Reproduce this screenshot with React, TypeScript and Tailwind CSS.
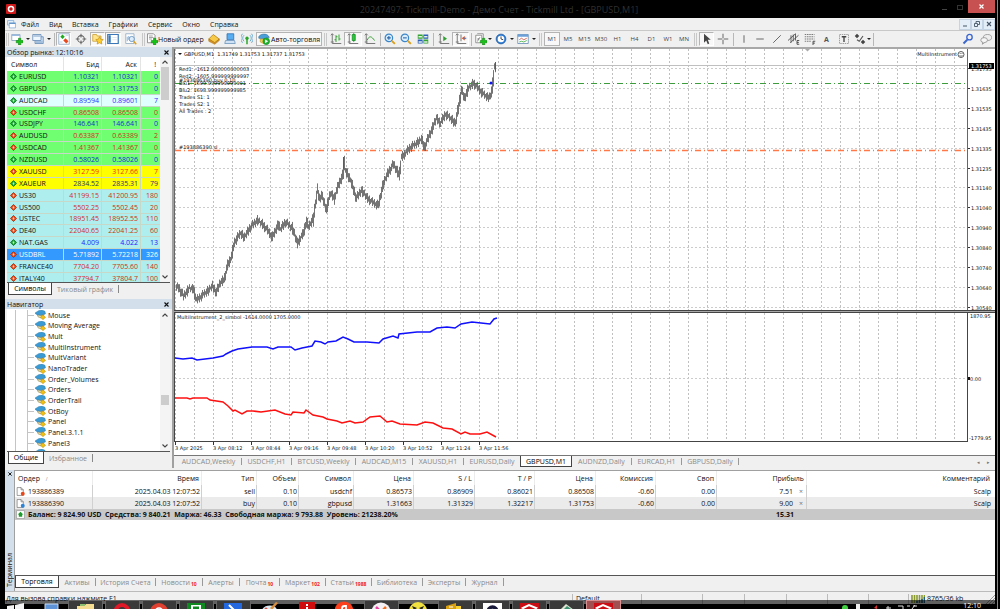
import type { ReactNode } from 'react'

// ── Data ────────────────────────────────────────────────────────
type Quote = { symbol: string; bid: string; ask: string; spread: string; up: boolean; row: string; text: string }

const GREEN = 'bg-[#70ff70]'
const AQUA = 'bg-[#afeeee]'
const BLUE_TEXT = 'text-[#1030d0]'
const RED_TEXT = 'text-[#d03020]'

const QUOTES: Quote[] = [
  { symbol: 'EURUSD',   bid: '1.10321',  ask: '1.10321',  spread: '0',   up: true,  row: GREEN, text: BLUE_TEXT },
  { symbol: 'GBPUSD',   bid: '1.31753',  ask: '1.31753',  spread: '0',   up: true,  row: GREEN, text: BLUE_TEXT },
  { symbol: 'AUDCAD',   bid: '0.89594',  ask: '0.89601',  spread: '7',   up: true,  row: 'bg-[#e0ffff]', text: 'text-[#3030ff]' },
  { symbol: 'USDCHF',   bid: '0.86508',  ask: '0.86508',  spread: '0',   up: false, row: GREEN, text: RED_TEXT },
  { symbol: 'USDJPY',   bid: '146.641',  ask: '146.641',  spread: '0',   up: true,  row: GREEN, text: BLUE_TEXT },
  { symbol: 'AUDUSD',   bid: '0.63387',  ask: '0.63389',  spread: '2',   up: false, row: GREEN, text: RED_TEXT },
  { symbol: 'USDCAD',   bid: '1.41367',  ask: '1.41367',  spread: '0',   up: false, row: GREEN, text: RED_TEXT },
  { symbol: 'NZDUSD',   bid: '0.58026',  ask: '0.58026',  spread: '0',   up: true,  row: GREEN, text: BLUE_TEXT },
  { symbol: 'XAUUSD',   bid: '3127.59',  ask: '3127.66',  spread: '7',   up: false, row: 'bg-[#ffff00]', text: 'text-[#f03000]' },
  { symbol: 'XAUEUR',   bid: '2834.52',  ask: '2835.31',  spread: '79',  up: true,  row: 'bg-[#ffff00]', text: 'text-[#303070]' },
  { symbol: 'US30',     bid: '41199.15', ask: '41200.95', spread: '180', up: false, row: AQUA, text: RED_TEXT },
  { symbol: 'US500',    bid: '5502.25',  ask: '5502.45',  spread: '20',  up: false, row: AQUA, text: RED_TEXT },
  { symbol: 'USTEC',    bid: '18951.45', ask: '18952.55', spread: '110', up: false, row: AQUA, text: RED_TEXT },
  { symbol: 'DE40',     bid: '22040.65', ask: '22041.25', spread: '60',  up: false, row: AQUA, text: RED_TEXT },
  { symbol: 'NAT.GAS',  bid: '4.009',    ask: '4.022',    spread: '13',  up: true,  row: AQUA, text: 'text-[#2020ff]' },
  { symbol: 'USDBRL',   bid: '5.71892',  ask: '5.72218',  spread: '326', up: false, row: 'bg-[#3399ff] text-white', text: 'text-white' },
  { symbol: 'FRANCE40', bid: '7704.20',  ask: '7705.60',  spread: '140', up: false, row: AQUA, text: RED_TEXT },
  { symbol: 'ITALY40',  bid: '37794.7',  ask: '37804.7',  spread: '100', up: false, row: AQUA, text: RED_TEXT },
]

const EXPERTS = [
  'Mouse', 'Moving Average', 'Mult', 'MultiInstrument', 'MultVariant', 'NanoTrader', 'Order_Volumes',
  'Orders', 'OrderTrail', 'OtBoy', 'Panel', 'Panel.3.1.1', 'Panel3', 'Parabolic',
]

const CHART_TABS = [
  { label: 'AUDCAD,Weekly', width: 'w-[66px]' },
  { label: 'USDCHF,H1',     width: 'w-[50px]' },
  { label: 'BTCUSD,Weekly', width: 'w-[64px]' },
  { label: 'AUDCAD,M15',    width: 'w-[57px]' },
  { label: 'XAUUSD,H1',     width: 'w-[51px]' },
  { label: 'EURUSD,Daily',  width: 'w-[56px]', last: true },
  { label: 'GBPUSD,M1',     width: 'w-[52px]', active: true },
  { label: 'AUDNZD,Daily',  width: 'w-[60px]' },
  { label: 'EURCAD,H1',     width: 'w-[50px]' },
  { label: 'GBPUSD,Daily',  width: 'w-[57px]' },
]

const TERMINAL_TABS = [
  { label: 'Активы',       width: 'w-[37px]' },
  { label: 'История Счета', width: 'w-[60px]' },
  { label: 'Новости',      width: 'w-[47px]', count: '10' },
  { label: 'Алерты',       width: 'w-[37px]' },
  { label: 'Почта',        width: 'w-[40px]', count: '10' },
  { label: 'Маркет',       width: 'w-[46px]', count: '102' },
  { label: 'Статьи',       width: 'w-[46px]', count: '1988' },
  { label: 'Библиотека',   width: 'w-[51px]' },
  { label: 'Эксперты',     width: 'w-[43px]' },
  { label: 'Журнал',       width: 'w-[38px]' },
]

const ORDER_COLUMNS = [
  { title: 'Время',       width: 'w-[109px]' },
  { title: 'Тип',         width: 'w-[55px]' },
  { title: 'Объем',       width: 'w-[42px]' },
  { title: 'Символ',      width: 'w-[55px]' },
  { title: 'Цена',        width: 'w-[60px]' },
  { title: 'S / L',       width: 'w-[61px]' },
  { title: 'T / P',       width: 'w-[60px]' },
  { title: 'Цена',        width: 'w-[61px]' },
  { title: 'Комиссия',    width: 'w-[60px]' },
  { title: 'Своп',        width: 'w-[61px]' },
]

const ORDERS = [
  { id: '193886389', sell: true,  profit: '7.51', cells: ['2025.04.03 12:07:52', 'sell', '0.10', 'usdchf', '0.86573', '0.86909', '0.86021', '0.86508', '-0.60', '0.00'] },
  { id: '193886390', sell: false, profit: '9.00', cells: ['2025.04.03 12:07:52', 'buy', '0.10', 'gbpusd', '1.31663', '1.31329', '1.32217', '1.31753', '-0.60', '0.00'] },
]

const PRICE_LEVELS = [
  { y: 20,  label: '1.31735' }, { y: 40,  label: '1.31635' }, { y: 60,  label: '1.31535' },
  { y: 80,  label: '1.31435' }, { y: 100, label: '1.31335' }, { y: 120, label: '1.31235' },
  { y: 139, label: '1.31140' }, { y: 159, label: '1.31040' }, { y: 179, label: '1.30940' },
  { y: 199, label: '1.30840' }, { y: 219, label: '1.30740' }, { y: 239, label: '1.30640' },
  { y: 259, label: '1.30540' },
]

const TIMES = ['2025', '08:12', '08:44', '09:16', '09:48', '10:20', '10:52', '11:24', '11:56']

const PRICE_PATH: [number, number][] = [
  [1, 238], [3, 238], [8, 247], [14, 239], [18, 240], [21, 251], [27, 246], [32, 242], [37, 237], [41, 243],
  [45, 233], [49, 230], [52, 216], [56, 208], [59, 193], [65, 184], [69, 188], [75, 178], [82, 171], [87, 175],
  [92, 181], [97, 188], [103, 175], [105, 180], [110, 173], [117, 179], [122, 194], [128, 184], [131, 172],
  [133, 178], [138, 169], [142, 141], [144, 149], [146, 146], [151, 160], [155, 144], [159, 149], [163, 136],
  [168, 124], [169, 114], [170, 121], [175, 131], [181, 149], [186, 141], [192, 149], [197, 153], [203, 156],
  [208, 134], [213, 123], [218, 115], [224, 126], [226, 108], [230, 104], [235, 98], [240, 95], [246, 90],
  [249, 98], [254, 86], [257, 79], [261, 69], [265, 74], [270, 65], [275, 69], [280, 74], [283, 58], [286, 41],
  [289, 49], [293, 39], [298, 34], [302, 38], [307, 44], [312, 48], [315, 47], [317, 38], [319, 18], [321, 18],
]

const BLUE_LINE = '0,45 8,46 17,45 22,47 38,45 48,43 51,41 57,38 63,36 70,35 77,34 92,34 98,36 103,34 116,34 120,37 127,35 132,34 137,33 140,28 146,29 150,31 153,29 161,28 168,24 173,26 179,29 192,29 204,30 208,26 218,23 223,25 224,21 242,19 255,19 262,15 272,14 280,15 286,11 297,9 306,10 315,11 319,6 322,5'
const RED_LINE = '0,85 12,85 15,86 18,85 32,85 35,87 48,89 53,93 58,98 60,97 67,101 72,98 78,98 86,99 100,97 110,101 116,102 118,99 129,100 131,97 138,102 148,104 152,106 162,108 167,110 175,108 180,110 188,109 195,104 205,103 212,109 217,108 225,111 242,112 250,109 258,110 268,115 277,116 286,121 290,119 295,121 305,121 312,119 321,124'

// Spread the outline over one thin bar per minute
function buildBars() {
  const bars: { x: number; y: number; h: number }[] = []
  for (let i = 1; i < PRICE_PATH.length; i++) {
    const [x0, y0] = PRICE_PATH[i - 1]
    const [x1, y1] = PRICE_PATH[i]
    for (let x = x0; x < x1; x++) {
      const y = y0 + ((y1 - y0) * (x - x0)) / (x1 - x0)
      const step = Math.abs((y1 - y0) / (x1 - x0))
      const up = 1 + ((x * 7) % 5) * 0.9 + step / 2
      const down = 1 + ((x * 11) % 7) * 0.7 + step / 2
      bars.push({ x, y: y - up, h: up + down })
    }
  }
  return bars
}
const BARS = buildBars()

// ── Icons ───────────────────────────────────────────────────────
function Svg({ children, className = 'w-[12px] h-[12px]' }: { children: ReactNode; className?: string }) {
  return <svg viewBox="0 0 16 16" fill="none" className={`block shrink-0 ${className}`}>{children}</svg>
}

const Plus = <path d="M8 11h3V8h3v3h3v3h-3v3h-3v-3H8z" transform="translate(-1 -1)" fill="#16c416" stroke="#087a08" strokeWidth=".7" />

const ICONS = {
  newChart: <><path d="M1 2h11v8H1z" fill="#fff" stroke="#7c9ab8" /><path d="M1 2h11v2H1z" fill="#9cbbe0" />{Plus}</>,
  profiles: <><path d="M4 5h11v9H4z" fill="#cfe2f5" stroke="#5b84b0" /><path d="M1 2h11v8H1z" fill="#eef6ff" stroke="#5b84b0" /><path d="M2 4h9M5 12h9" stroke="#5b84b0" /></>,
  market: <><path d="M1 1h14v14H1z" fill="#fff" stroke="#8aa4c0" /><path d="M3 5l3-3 3 3-3 3z" fill="#1dab1d" /><path d="M7 10l3-3 4 4-3 3z" fill="#e84a20" /><path d="M2 12h4M10 3h4" stroke="#a8c4e4" /></>,
  target: <><circle cx="8" cy="8" r="4.5" stroke="#666" strokeWidth="1.4" /><path d="M8 1v5M8 10v5M1 8h5M10 8h5" stroke="#666" strokeWidth="1.4" /></>,
  folder: <><path d="M1 2h5l1 2h5v7H1z" fill="#ffe48a" stroke="#c79a2a" /><path d="M10 5l1.5 3.3 3.5.4-2.6 2.4.7 3.6L10 13l-3.1 1.7.7-3.6L5 8.700l3.500-.4z" fill="#ffcf30" stroke="#b98510" strokeWidth=".8" /></>,
  navigator: <><path d="M1 2h14v12H1z" fill="#fff" stroke="#3b78b8" strokeWidth="1.6" /><path d="M2 3h3v10H2z" fill="#3b78b8" /><path d="M7 6h6M7 9h6" stroke="#d5e2ee" /></>,
  tester: <><path d="M1 1h11v13H1z" fill="#fff" stroke="#8aa4c0" /><path d="M3 11V5M5 9V4M7 10V6" stroke="#6c9ed0" /><circle cx="9" cy="8" r="3.5" fill="#dcecfb" stroke="#5585b5" /><path d="M11.500 11l3.500 4" stroke="#d8a020" strokeWidth="2" /></>,
  order: <><path d="M2 1h8l2 2v10H2z" fill="#fff" stroke="#777" /><path d="M4 4h5M4 6h6M4 8h4" stroke="#888" />{Plus}</>,
  book: <><path d="M1 8l6-6 8 6-6 5z" fill="#f7c948" stroke="#b07c10" /><path d="M1 8v3l8 4 6-5V8l-6 5z" fill="#d8942a" stroke="#a8700a" strokeWidth=".7" /></>,
  laptop: <><path d="M4 1h9v8H4z" fill="#58aef0" stroke="#2a6cb0" /><path d="M2 10h12l1 4H1z" fill="#cfe2f5" stroke="#6790b8" /></>,
  signal: <><circle cx="8" cy="7" r="2.200" fill="#2ba82b" /><path d="M4 11a5.500 5.500 0 010-8M12 3a5.500 5.500 0 010 8M2 13a9 9 0 010-12M14 1a9 9 0 010 12" stroke="#64a8d0" strokeWidth="1.300" /><path d="M8 8v7" stroke="#2ba82b" strokeWidth="2" /></>,
  auto: <><path d="M1 5c2-4 10-5 13-1l1 2-7 2-7-1z" fill="#4a9fd8" stroke="#2c6c9c" strokeWidth=".7" /><path d="M3 8h8v4l-4 2-4-2z" fill="#f2cd4c" stroke="#b08a20" strokeWidth=".7" /><circle cx="11" cy="11" r="4.500" fill="#20b030" stroke="#0c7a18" strokeWidth=".6" /><path d="M9.500 8.500l4 2.500-4 2.500z" fill="#fff" /></>,
  bars: <><path d="M3 1v13h12M1 12h4M1 3l2-2 2 2" stroke="#777" strokeWidth="1.300" /><path d="M8 3v9M6 9h2M8 5h2M12 2v8M12 8h2" stroke="#33a033" strokeWidth="1.300" /></>,
  candles: <><path d="M3 1v13h12M1 12h4M1 3l2-2 2 2" stroke="#777" strokeWidth="1.300" /><path d="M9 0v12" stroke="#108a20" /><path d="M7 2h4v8H7z" fill="#28c838" stroke="#108a20" /></>,
  line: <><path d="M3 1v13h12M1 12h4M1 3l2-2 2 2" stroke="#777" strokeWidth="1.300" /><path d="M4 10c3-7 6-6 10 0" stroke="#33a033" strokeWidth="1.300" /></>,
  zoomIn: <><circle cx="6.500" cy="6.500" r="5" fill="#d9edfc" stroke="#3c86c8" strokeWidth="1.600" /><path d="M4 6.500h5M6.500 4v5" stroke="#2463a8" strokeWidth="1.400" /><path d="M10.500 10.500l4 4" stroke="#d8a020" strokeWidth="2.600" /></>,
  zoomOut: <><circle cx="6.500" cy="6.500" r="5" fill="#d9edfc" stroke="#3c86c8" strokeWidth="1.600" /><path d="M4 6.500h5" stroke="#2463a8" strokeWidth="1.400" /><path d="M10.500 10.500l4 4" stroke="#d8a020" strokeWidth="2.600" /></>,
  tile: <><path d="M1 2h6.500v5.500H1zM8.500 8.500H15V14H8.500z" fill="#31a331" /><path d="M8.500 2H15v5.500H8.500zM1 8.500h6.500V14H1z" fill="#2a60b8" /><path d="M2 4h4.500v2H2zM9.500 4H14v2H9.500zM2 11h4.500v2H2zM9.500 11H14v2H9.500z" fill="#e6f2e6" /></>,
  scroll: <><path d="M3 1v13h12M1 12h4M1 3l2-2 2 2" stroke="#777" strokeWidth="1.300" /><path d="M7 4l5 3.500L7 11z" fill="#33a033" /></>,
  shift: <><path d="M3 1v13h12M1 12h4M1 3l2-2 2 2M8 2v9" stroke="#777" strokeWidth="1.300" /><path d="M9 7l4-3v6z" fill="#e05020" /><path d="M12 7h3" stroke="#3c76c0" strokeWidth="1.500" /></>,
  indicator: <><path d="M1 3h8v10H1zM3 1h8v10" fill="#fff" stroke="#777" /><path d="M3 11c2 0 1-5 4-5M3 8h3" stroke="#666" />{Plus}</>,
  clock: <><circle cx="8" cy="8" r="6.500" fill="#2f7ed8" stroke="#1b559c" /><circle cx="8" cy="8" r="4.400" fill="#fff" /><path d="M8 4.500V8l3 1" stroke="#333" strokeWidth="1.200" /></>,
  template: <><path d="M1 2h14v12H1z" fill="#fff" stroke="#5b84b0" /><path d="M1 2h14v3H1z" fill="#6ba0d8" /><path d="M3 9l3-2 3 2 4-2" stroke="#c04030" /><path d="M3 12l3-1 3 1 4-2" stroke="#2b9c2b" /></>,
  cursor: <path d="M4 1v12l3-3 2 5 2-1-2-5h4z" fill="#444" />,
  cross: <path d="M8 1v6M8 9v6M1 8h6M9 8h6" stroke="#666" strokeWidth="1.300" />,
  vline: <path d="M8 3v10" stroke="#666" strokeWidth="1.300" />,
  hline: <path d="M3 8h10" stroke="#666" strokeWidth="1.300" />,
  tline: <path d="M3 13L13 3" stroke="#666" strokeWidth="1.300" />,
  channel: <><path d="M0 10l10-9M3 13l11-10M4 3v10M7 2v9M10 1v9" stroke="#555" strokeWidth="1.200" /><path d="M15 10h-3v5h3M12 12.500h2.500" stroke="#444" strokeWidth="1.200" /></>,
  fibo: <><path d="M1 2h13M1 5h13M1 8h13M1 11h8" stroke="#777" strokeWidth="1.300" strokeDasharray="2 1" /><path d="M12 16v-5h3M12 13.500h2.500" stroke="#444" strokeWidth="1.200" /></>,
  label: <><path d="M2 2h12v12H2z" stroke="#888" strokeDasharray="2 1" /><path d="M5 5h6M8 5v7" stroke="#444" strokeWidth="1.800" /></>,
  arrows: <><path d="M1 4l3-3 3 3-3 3zM9 12l3-3 3 3-3 3z" fill="#444" /><path d="M4 9l3 2 5-7" stroke="#555" strokeWidth="1.500" /></>,
  search: <><circle cx="10" cy="5.500" r="3.600" stroke="#3a66d0" strokeWidth="1.800" /><path d="M7 9l-5 5" stroke="#3a66d0" strokeWidth="2.600" /></>,
  chat: <><ellipse cx="10" cy="6" rx="5.500" ry="4" fill="#eee" stroke="#888" /><ellipse cx="5.500" cy="9.500" rx="4.500" ry="3.300" fill="#f6f6f6" stroke="#888" /><path d="M4 12l-1 3 3-2" fill="#f6f6f6" stroke="#888" /></>,
}
type IconName = keyof typeof ICONS

function Expert() {
  return (
    <Svg className="w-[11px] h-[10px]">
      <path d="M-1 5l6-4 5-1 5 2 1 4-6 3-7-1z" fill="#3a9ad4" stroke="#2a7aa8" strokeWidth=".8" />
      <path d="M3 8l6 1 4-2v3l-4 3-5-2z" fill="#e0d8a8" stroke="#7d7a50" strokeWidth=".7" />
      <path d="M12 8l4 3.500-4 4-4-4z" fill="#f2c010" stroke="#a88208" strokeWidth=".8" />
    </Svg>
  )
}

function QuoteArrow({ up }: { up: boolean }) {
  return (
    <Svg className="w-[7px] h-[7px]">
      <path d="M8 1l7 7-7 7-7-7z" fill={up ? '#20a838' : '#e8481c'} stroke={up ? '#0d7a22' : '#b03008'} strokeWidth="2" />
      <path d={up ? 'M8 5l3 3H9v3H7V8H5z' : 'M8 11l3-3H9V5H7v3H5z'} fill={up ? '#c8f4d0' : '#fcd8c8'} />
    </Svg>
  )
}

// ── Small parts ─────────────────────────────────────────────────
function Tool({ icon, label, width, pressed }: { icon: IconName; label: string; width: string; pressed?: boolean }) {
  return (
    <button
      aria-label={label}
      className={`flex h-[14px] shrink-0 items-center justify-center ${width} ${pressed ? 'border border-[#b4b4b4] border-r-white border-b-white bg-[#f8f8f8]' : ''}`}
    >
      <Svg>{ICONS[icon]}</Svg>
    </button>
  )
}

function Caret({ width }: { width: string }) {
  return (
    <button aria-label="Список" className={`flex h-[14px] shrink-0 items-center justify-center ${width}`}>
      <svg viewBox="0 0 4 2" className="h-[2px] w-[4px]"><path d="M0 0h4L2 2z" fill="#222" /></svg>
    </button>
  )
}

function Sep({ width }: { width: string }) {
  return <span className={`flex h-[13px] shrink-0 justify-center ${width}`}><span className="w-px bg-[#b8b8b8]" /></span>
}

function Grip({ width }: { width: string }) {
  return <span className={`flex h-[13px] shrink-0 justify-center ${width}`}><span className="w-[3px] border-x border-[#c8c8c8]" /></span>
}

function Chevron({ up }: { up?: boolean }) {
  return (
    <svg viewBox="0 0 6 4" fill="none" className="h-[4px] w-[6px]">
      <path d={up ? 'M.5 3.500L3 1l2.500 2.500' : 'M.5.5L3 3 5.500.5'} stroke="#444" strokeWidth="1.100" />
    </svg>
  )
}

function PanelTitle({ children }: { children: ReactNode }) {
  return (
    <div className="flex h-[10px] shrink-0 items-center justify-between bg-[#d3dfea] pl-[2px] pr-[3px]">
      <h2 className="whitespace-nowrap">{children}</h2>
      <button aria-label="Закрыть" className="h-[6px] w-[5px]">
        <svg viewBox="0 0 5 5" className="h-[5px] w-[5px]"><path d="M.5.5l4 4M4.500.5l-4 4" stroke="#111" strokeWidth="1.100" /></svg>
      </button>
    </div>
  )
}

// ── Market watch ────────────────────────────────────────────────
function MarketWatch() {
  const cell = 'border-b border-l border-[#c8d8c8] p-0 pr-[2px] text-right'
  return (
    <section>
      <PanelTitle>Обзор рынка: 12:10:16</PanelTitle>
      <div className="ml-[2px] mr-[2px] flex h-[226px] overflow-hidden border-b border-[#555] bg-white">
        <table className="h-[228px] flex-1 table-fixed border-separate border-spacing-0">
          <thead>
            <tr className="h-[14px]">
              <th className="w-[56px] p-0 pl-[4px] text-left font-normal">Символ</th>
              <th className="w-[38px] border-l border-[#e4e4e4] p-0 pr-[2px] text-right font-normal">Бид</th>
              <th className="w-[39px] border-l border-[#e4e4e4] p-0 pr-[3px] text-right font-normal">Аск</th>
              <th className="w-[20px] border-l border-[#e4e4e4] p-0 pr-[4px] text-right font-normal">!</th>
            </tr>
          </thead>
          <tbody>
            {QUOTES.map(q => (
              <tr key={q.symbol} className={q.row}>
                <td className="border-b border-[#c8d8c8] p-0 pl-[3px]">
                  <span className="flex items-center gap-[2px]"><QuoteArrow up={q.up} />{q.symbol}</span>
                </td>
                <td className={`${cell} ${q.text}`}>{q.bid}</td>
                <td className={`${cell} ${q.text}`}>{q.ask}</td>
                <td className={`${cell} ${q.text}`}>{q.spread}</td>
              </tr>
            ))}
          </tbody>
        </table>
        <div className="flex w-[10px] flex-col items-center bg-[#f4f4f4] py-[3px]">
          <Chevron up />
          <span className="mt-[3px] h-[33px] w-[8px] bg-[#cdcdcd]" />
          <span className="mt-auto"><Chevron /></span>
        </div>
      </div>
      <div className="flex h-[16px] items-start pl-[3px] text-[#8a8a8a]">
        <button className="h-[12px] w-[44px] border border-t-0 border-[#444] bg-white text-black">Символы</button>
        <button className="h-[12px] pl-[5px]">Тиковый график</button>
        <span className="mt-[2px] ml-[5px] h-[8px] w-px bg-[#888]" />
      </div>
    </section>
  )
}

// ── Navigator ───────────────────────────────────────────────────
function Navigator() {
  return (
    <section>
      <PanelTitle>Навигатор</PanelTitle>
      <div className="ml-[2px] mr-[2px] flex h-[143px] overflow-hidden border-b border-[#555] bg-white pt-px">
        <ul className="ml-[8px] flex h-[149px] flex-1 flex-col border-l border-[#c4c4c4] pl-[11px]">
          {EXPERTS.map(name => (
            <li key={name} className="flex min-h-0 flex-1 items-center border-l border-[#c4c4c4]">
              <span className="mr-px h-px w-[6px] bg-[#c4c4c4]" />
              <Expert />
              <span className="pl-[2px]">{name}</span>
            </li>
          ))}
        </ul>
        <div className="flex w-[10px] flex-col items-center bg-[#f4f4f4] py-[3px]">
          <Chevron up />
          <span className="mt-[78px] h-[10px] w-[8px] bg-[#cdcdcd]" />
          <span className="mt-auto"><Chevron /></span>
        </div>
      </div>
      <div className="flex h-[16px] items-start pl-[3px] text-[#8a8a8a]">
        <button className="h-[12px] w-[36px] border border-t-0 border-[#444] bg-white text-black">Общие</button>
        <button className="h-[12px] pl-[5px]">Избранное</button>
        <span className="mt-[2px] ml-[5px] h-[8px] w-px bg-[#888]" />
      </div>
    </section>
  )
}

// ── Chart ───────────────────────────────────────────────────────
function VerticalGrid({ id }: { id: string }) {
  return (
    <>
      <pattern id={id} x="19" width="19" height="4" patternUnits="userSpaceOnUse">
        <path d="M.5 0v2" stroke="#c0c0c0" />
      </pattern>
      <rect width="100%" height="100%" fill={`url(#${id})`} />
    </>
  )
}

function Chart() {
  const small = "[font-family:'DejaVu_Sans',sans-serif] text-[5px] fill-[#111]"
  return (
    <section className="flex min-w-0 flex-1 flex-col border-l-2 border-[#a0a0a0] bg-white">
      <div className="flex border-t-2 border-[#a8a8a8]">
        <svg className={`h-[261px] min-w-0 flex-1 border-l border-r border-[#666] ${small}`}>
          <VerticalGrid id="grid-price" />
          {PRICE_LEVELS.map(p => <line key={p.y} x1="0" x2="100%" y1={p.y - 0.5} y2={p.y - 0.5} stroke="#cccccc" strokeDasharray="2 2" />)}
          <line x1="0" x2="100%" y1="16.5" y2="16.5" stroke="#c0c0c0" />
          <line x1="0" x2="100%" y1="34.5" y2="34.5" stroke="#3c9c3c" strokeDasharray="6 3 1 3" />
          <line x1="0" x2="100%" y1="101.500" y2="101.500" stroke="#ff7848" strokeWidth="1.300" strokeDasharray="6 3 1 3" />
          <g fill="#5c5c5c">
            {BARS.map(b => <rect key={b.x} x={b.x} y={b.y} width=".85" height={b.h} />)}
            <rect x="168" y="108" width="1" height="12" />
            <rect x="320" y="13" width="1" height="9" />
          </g>
          <circle cx="316" cy="34" r="1.500" fill="#1010ff" />
          <path d="M3 4h4L5 6z" />
          <text x="9" y="7">GBPUSD,M1&#160; 1.31749 1.31753 1.31737 1.31753</text>
          <text x="4" y="22">Red1: -1612.000000000003</text>
          <text x="4" y="29">Red2: -1605.999999999997</text>
          <text x="4" y="33">#193886390 buy 0.10</text>
          <text x="4" y="36">Blu1: 1699.999999999991</text>
          <text x="4" y="43">Blu2: 1698.999999999985</text>
          <text x="4" y="50">Trades S1: 1</text>
          <text x="4" y="57">Trades S2: 1</text>
          <text x="4" y="64">All Trades : 2</text>
          <text x="4" y="100">#193886390 sl</text>
          <svg x="100%" overflow="visible">
            <text x="-10" y="7" textAnchor="end">MultiInstrument</text>
            <circle cx="-6" cy="5.500" r="3" fill="none" stroke="#333" strokeWidth=".8" />
            <path d="M-7.500 6.500q1.500 1.500 3 0M-7.300 4.500h1M-5.500 4.500h1" stroke="#333" strokeWidth=".7" fill="none" />
            <path d="M-162 0h5l-2.500 2.500z" fill="#aaa" />
          </svg>
        </svg>
        <svg className={`h-[261px] w-[27px] ${small}`}>
          {PRICE_LEVELS.map(p => (
            <g key={p.y}>
              <path d={`M0 ${p.y - 0.5}h2`} stroke="#333" />
              <text x="3" y={p.y + 2}>{p.label}</text>
            </g>
          ))}
          <rect x="1" y="14" width="25" height="6" fill="#000" />
          <text x="3" y="19" className="fill-white">1.31753</text>
        </svg>
      </div>
      <div className="h-[3px] border-y border-[#444] bg-[#a8a8a8]" />
      <div className="flex">
        <svg className={`h-[129px] min-w-0 flex-1 border-l border-r border-b border-[#444] ${small}`}>
          <VerticalGrid id="grid-indicator" />
          <line x1="0" x2="100%" y1="65.500" y2="65.500" stroke="#cccccc" strokeDasharray="2 2" />
          <polyline points={BLUE_LINE} fill="none" stroke="#1010ff" strokeWidth="1.500" />
          <polyline points={RED_LINE} fill="none" stroke="#ff1010" strokeWidth="1.500" />
          <text x="2" y="6">MultiInstrument_2_simbol -1614.0000 1705.0000</text>
        </svg>
        <svg className={`h-[129px] w-[27px] ${small}`}>
          <text x="2" y="5">1870.95</text>
          <rect x="0" y="64" width="2" height="3" />
          <text x="2" y="68">0.00</text>
          <text x="1" y="127">-1779.95</text>
        </svg>
      </div>
      <svg className={`h-[13px] w-full ${small}`}>
        {TIMES.map((t, i) => (
          <g key={t}>
            <path d={`M${i * 38 + 1.5} 0v3`} stroke="#333" />
            <text x={i * 38 + 1} y="8">3 Apr {t}</text>
          </g>
        ))}
      </svg>
      <nav className="flex h-[13px] border-t border-[#777] bg-[#f0f0f0] pl-[2px] text-[#8a8a8a]">
        {CHART_TABS.map(t => (
          <button
            key={t.label}
            className={t.active
              ? `h-[11px] whitespace-nowrap border border-t-0 border-[#444] bg-white text-black ${t.width}`
              : `flex h-[11px] items-center justify-center whitespace-nowrap ${t.width}`}
          >
            {t.active ? t.label : <span className={`flex h-[7px] w-full items-center justify-center ${t.last ? '' : 'border-r border-[#999]'}`}>{t.label}</span>}
          </button>
        ))}
        <span className="ml-auto flex items-center gap-[7px] pr-[5px] text-[5px] text-[#777]">
          <button aria-label="Влево">◂</button><button aria-label="Вправо">▸</button>
        </span>
      </nav>
    </section>
  )
}

// ── Terminal ────────────────────────────────────────────────────
function OrderIcon({ sell }: { sell: boolean }) {
  return (
    <Svg className="w-[9px] h-[9px]">
      <path d="M2 1h7l4 4v10H2z" fill="#fff" stroke="#555" /><path d="M9 1v4h4" stroke="#555" />
      <circle cx="12" cy="12" r="3.500" fill={sell ? '#e84818' : '#2c84d8'} />
    </Svg>
  )
}

function Terminal() {
  const cell = 'border-r border-[#d0d0d0] p-0 pr-px text-right'
  return (
    <section className="mt-[2px] flex min-h-[80px] flex-1">
      <div className="flex w-[9px] shrink-0 flex-col items-center justify-between bg-[#d3dfea] pt-[2px] pb-[4px]">
        <button aria-label="Закрыть"><svg viewBox="0 0 5 5" className="h-[4px] w-[4px]"><path d="M.5.5l4 4M4.500.5l-4 4" stroke="#111" strokeWidth="1.200" /></svg></button>
        <h2 className="rotate-180 [writing-mode:vertical-rl]">Терминал</h2>
      </div>
      <div className="flex min-w-0 flex-1 flex-col border-t border-l border-[#a0a0a0] bg-white">
        <table className="w-full table-fixed border-separate border-spacing-0 whitespace-nowrap">
          <thead>
            <tr className="h-[14px]">
              <th className="w-[78px] border-r border-[#ececec] p-0 pl-[3px] text-left font-normal">Ордер <span className="pl-[4px] text-[5px] text-[#888]">/</span></th>
              {ORDER_COLUMNS.map((c, i) => (
                <th key={i} className={`border-r border-[#ececec] p-0 pr-[2px] text-right font-normal ${c.width}`}>{c.title}</th>
              ))}
              <th className="w-[90px] border-r border-[#ececec] p-0 pr-[2px] text-right font-normal">Прибыль</th>
              <th className="p-0 pr-[5px] text-right font-normal">Комментарий</th>
            </tr>
          </thead>
          <tbody>
            {ORDERS.map(o => (
              <tr key={o.id} className={`h-[12px] ${o.sell ? 'bg-white' : 'bg-[#ebebeb]'}`}>
                <td className="border-r border-[#d0d0d0] p-0 pl-px"><span className="flex items-center gap-[3px]"><OrderIcon sell={o.sell} />{o.id}</span></td>
                {o.cells.map((c, i) => <td key={i} className={cell}>{c}</td>)}
                <td className={cell}>
                  <span className="flex items-center justify-end gap-[6px]">{o.profit}<button aria-label="Закрыть ордер" className="pr-[2px] text-[#777]">×</button></span>
                </td>
                <td className="p-0 pr-[4px] text-right">Scalp</td>
              </tr>
            ))}
            <tr className="h-[11px] bg-[#c8c8c8] font-bold">
              <td colSpan={11} className="p-0 pl-px">
                <span className="flex items-center gap-[3px]">
                  <Svg className="w-[9px] h-[9px]"><path d="M1 1h14v14H1z" fill="#fff" stroke="#888" /><path d="M8 3l5 5h-2v4H5V8H3z" fill="#1c9c2c" /></Svg>
                  <span className="whitespace-pre">{'Баланс: 9 824.90 USD  Средства: 9 840.21  Маржа: 46.33  Свободная маржа: 9 793.88  Уровень: 21238.20%'}</span>
                </span>
              </td>
              <td className="p-0 pr-[13px] text-right">15.31</td>
              <td className="p-0" />
            </tr>
          </tbody>
        </table>
        <nav className="mt-auto flex h-[16px] items-start border-t border-[#555] bg-[#f0f0f0] text-[#8a8a8a]">
          <button className="h-[12px] w-[44px] border border-t-0 border-[#444] bg-white text-black">Торговля</button>
          {TERMINAL_TABS.map(t => (
            <button key={t.label} className={`flex h-[12px] items-center justify-center whitespace-nowrap ${t.width}`}>
              <span className="flex h-[8px] w-full items-center justify-center border-r border-[#999]">
                {t.label}{t.count && <span className="mt-[4px] pl-px text-[5px] font-bold text-[#f02020]">{t.count}</span>}
              </span>
            </button>
          ))}
        </nav>
      </div>
    </section>
  )
}

function StatusBar() {
  const cell = 'h-[10px] border-l border-[#bbb]'
  return (
    <footer className="flex h-[13px] shrink-0 items-end border-t border-[#bbb] bg-[#f0f0f0] leading-[10px]">
      <span className="flex-1 whitespace-nowrap pl-px">Для вызова справки нажмите F1</span>
      <span className={`w-[69px] pl-[3px] ${cell}`}>Default</span>
      <span className={`w-[61px] ${cell}`} />
      <span className={`w-[42px] ${cell}`} />
      <span className={`w-[42px] ${cell}`} />
      <span className={`w-[41px] ${cell}`} />
      <span className={`w-[41px] ${cell}`} />
      <span className={`w-[40px] ${cell}`} />
      <span className={`flex w-[77px] items-center gap-[2px] pl-[2px] ${cell}`}>
        <svg viewBox="0 0 14 8" className="h-[8px] w-[14px]">
          <path d="M1 0v8M3.500 0v8M6 0v8M8.500 0v8M11 0v8M13.500 0v8" stroke="#8a9a30" strokeWidth="1.600" />
          <path d="M6 6v2M8.500 5v3M11 4v4M13.500 2v6" stroke="#1f5c86" strokeWidth="1.600" />
        </svg>
        8765/36 kb
      </span>
      <svg viewBox="0 0 10 10" className="h-[10px] w-[10px]"><path d="M1 10l9-9M4 10l6-6M7 10l3-3" stroke="#999" /></svg>
    </footer>
  )
}

// ── Taskbar ─────────────────────────────────────────────────────
const TASKS: { name: string; open?: boolean; active?: boolean; icon: ReactNode }[] = [
  { name: 'Проводник', open: true, icon: <><path d="M1 4h7l2-2h8v14H1z" fill="#f4dc90" /><path d="M4 2h5v2H4z" fill="#8cc070" /></> },
  { name: 'Opera', open: true, icon: <ellipse cx="9" cy="10" rx="6.500" ry="7" fill="none" stroke="#e01828" strokeWidth="4" /> },
  { name: 'Chrome', open: true, icon: <><circle cx="9" cy="10" r="9" fill="#e04030" /><path d="M9 10l9 0a9 9 0 01-9 9z" fill="#f8c820" /><circle cx="9" cy="10" r="4" fill="#3c80e8" stroke="#fff" strokeWidth="1.500" /></> },
  { name: 'Таблицы', open: true, icon: <><path d="M0 1h18v17H0z" fill="#108a20" /><path d="M4 3h10v6H4z" fill="#fff" /><path d="M6 4.500h6v4H6z" fill="#108a20" /></> },
  { name: 'PowerShell', open: true, icon: <><path d="M0 1h18v17H0z" fill="#2468e0" /><path d="M5 3l5 5-5 5" fill="none" stroke="#fff" strokeWidth="2" /></> },
  { name: 'Paint', icon: <><path d="M1 9c2-6 14-6 15 0s-5 7-8 7-8-2-7-7z" fill="#d8e8f4" /><path d="M9 7l6-6 2 1-6 7z" fill="#d89040" /><circle cx="5" cy="8" r="1.500" fill="#e05040" /></> },
  { name: 'Инфо', icon: <><path d="M1 1h16v16H1z" fill="#d00c0c" /><path d="M8 3h2v2H8zM8 6h2v6H8z" fill="#fff" /></> },
  { name: 'Яндекс', icon: <><circle cx="9" cy="10" r="9.500" fill="#fc3f1d" /><path d="M11 16V5H9.500a2.500 2.500 0 000 5H11" fill="none" stroke="#fff" strokeWidth="1.800" /></> },
  { name: 'Диск', open: true, icon: <><circle cx="9" cy="10" r="9.500" fill="#f4f0f4" /><path d="M4 5l5 5" stroke="#e840a0" strokeWidth="2.500" /><path d="M14 5l-5 5" stroke="#f07020" strokeWidth="2.500" /></> },
  { name: 'Смайлик', icon: <><circle cx="9" cy="10" r="9" fill="#f0e040" /><path d="M3 5l5 2-3 2zM15 5l-5 2 3 2z" fill="#222" /></> },
  { name: 'Почта', open: true, icon: <><path d="M0 4l10-3v17H0z" fill="#d8a010" /><path d="M10 4h5v10h-5z" fill="#f8d030" /><path d="M3 5h4M3 8h3" stroke="#fff" /></> },
  { name: 'Обсидиан', open: true, icon: <><path d="M0 1h19v17H0z" fill="#fff" /><path d="M5 10a4.500 5 0 019 0" fill="none" stroke="#181838" strokeWidth="3.500" /></> },
  { name: 'Терминал 1', open: true, icon: <><path d="M0 1h19v17H0z" fill="#cc0c14" /><path d="M3 6l6-3 7 3-6 4z" fill="none" stroke="#fff" strokeWidth="2" /></> },
  { name: 'Фото', open: true, icon: <><path d="M2 9l7-7 8 6-6 8z" fill="#dce4d0" /><path d="M6 8l4-4 4 3-3 4z" fill="#3a9070" /></> },
  { name: 'Терминал 2', open: true, active: true, icon: <><path d="M0 1h19v17H0z" fill="#cc0c14" /><path d="M3 6l6-3 7 3-6 4z" fill="none" stroke="#fff" strokeWidth="2" /></> },
]

function Taskbar() {
  return (
    <nav aria-label="Панель задач" className="relative -mt-[4px] flex h-[9px] shrink-0 items-start overflow-hidden bg-black/60">
      <button aria-label="Пуск" className="ml-[2px] mt-[3px] w-[24px]">
        <svg viewBox="0 0 17 16" className="block h-[16px] w-[17px]"><path d="M0 3l7-1v6H0zM8 2l9-2v8H8z" fill="#f4f4f4" /></svg>
      </button>
      <button aria-label="Компьютер" className="mt-[2px] flex w-[37px] justify-center">
        <svg viewBox="0 0 20 16" className="block h-[16px] w-[20px]"><path d="M5 2h13v8H5z" fill="#5f93d8" stroke="#c8dcf4" /><path d="M1 8h14v6H1z" fill="#dce8f4" /></svg>
      </button>
      {TASKS.map(t => (
        <button
          key={t.name}
          aria-label={t.name}
          className={`mr-[2px] flex h-[20px] w-[35px] justify-center pt-px ${t.active ? 'border border-[#d89090] bg-[#a05050]' : t.open ? 'border border-[#666] bg-[#3a3a3a]' : ''}`}
        >
          <svg viewBox="0 0 19 19" className="block h-[19px] w-[19px]">{t.icon}</svg>
        </button>
      ))}
      <div className="ml-auto mt-px mr-[14px] flex items-start text-[7px] leading-[9px] text-white">
        <svg viewBox="0 0 100 6" className="mt-[2px] mr-[36px] h-[6px] w-[100px]">
          <circle cx="18" cy="5" r="3" fill="#40d040" /><path d="M29 1h4v5h-4z" fill="#eee" /><path d="M47 5l3-3v4z" fill="#e03030" />
          <path d="M59 5h5M61 3v3M71 3h5v3M80 3h3M86 3h4M85 6l3-4" stroke="#ddd" fill="none" />
        </svg>
        <time>12:10</time>
      </div>
    </nav>
  )
}

// ── Window ──────────────────────────────────────────────────────
const TIMEFRAMES = [
  { label: 'M5',  width: 'w-[16px]' }, { label: 'M15', width: 'w-[17px]' }, { label: 'M30', width: 'w-[16px]' },
  { label: 'H1',  width: 'w-[17px]' }, { label: 'H4',  width: 'w-[17px]' }, { label: 'D1',  width: 'w-[17px]' },
  { label: 'W1',  width: 'w-[16px]' }, { label: 'MN',  width: 'w-[16px]' },
]

const MENU = ['Файл', 'Вид', 'Вставка', 'Графики', 'Сервис', 'Окно', 'Справка']

function TitleBar() {
  return (
    <header className="flex h-[18px] shrink-0 items-center bg-black">
      <svg viewBox="0 0 10 10" className="ml-px h-[10px] w-[10px]">
        <rect width="10" height="10" rx="1" fill="#d01818" /><circle cx="5" cy="5" r="2.500" fill="none" stroke="#fff" strokeWidth="1.600" /><path d="M5 3.500L6.500 5 5 6.500 3.500 5z" fill="#d01818" />
      </svg>
      <h1 className="flex-1 pl-[46px] text-center text-[9px] text-[#303030]">20247497: Tickmill-Demo - Демо Счет - Tickmill Ltd - [GBPUSD,M1]</h1>
      <div className="flex items-start self-start text-white">
        <button aria-label="Свернуть" className="flex h-[10px] w-[16px] items-end justify-center"><span className="h-px w-[5px] bg-[#444]" /></button>
        <button aria-label="Развернуть" className="flex h-[10px] w-[16px] items-end justify-center"><span className="h-[5px] w-[6px] border border-[#333]" /></button>
        <button aria-label="Закрыть" className="flex h-[13px] w-[27px] items-center justify-center bg-[#c75050]">
          <svg viewBox="0 0 5 5" className="h-[5px] w-[5px]"><path d="M.5.5l4 4M4.500.5l-4 4" stroke="#fff" strokeWidth="1.200" /></svg>
        </button>
      </div>
    </header>
  )
}

function MenuBar() {
  const box = 'flex h-[11px] w-[12px] items-center justify-center border border-[#c4d4e4] bg-[#e4eef8]'
  return (
    <nav className="flex h-[13px] shrink-0 items-center border-b border-[#c8c8c8] bg-[#f0f0f0]">
      <Svg className="ml-[2px] mr-[5px] h-[9px] w-[9px]"><path d="M1 1h11v8H1z" fill="#e8f2fc" stroke="#5b90c8" /><path d="M4 5h11v9H4z" fill="#fff" stroke="#5b90c8" /><path d="M4 6h11" stroke="#5b90c8" strokeWidth="2" /></Svg>
      <ul className="flex gap-[10px]">
        {MENU.map(m => <li key={m}><button>{m}</button></li>)}
      </ul>
      <div className="ml-auto flex">
        <button aria-label="Свернуть окно" className={box}><svg viewBox="0 0 6 6" className="h-[6px] w-[6px]"><path d="M1 5h4" stroke="#456" /></svg></button>
        <button aria-label="Восстановить окно" className={box}><svg viewBox="0 0 6 6" fill="none" className="h-[6px] w-[6px]"><path d="M.5 2.500h3v3h-3zM2 2V.5h3.500v3H4" stroke="#456" strokeWidth=".9" /></svg></button>
        <button aria-label="Закрыть окно" className={box}><svg viewBox="0 0 6 6" className="h-[6px] w-[6px]"><path d="M1 1l4 4M5 1L1 5" stroke="#456" strokeWidth="1.100" /></svg></button>
      </div>
    </nav>
  )
}

function Toolbar() {
  return (
    <div className="flex h-[16px] shrink-0 items-center overflow-hidden bg-[#f0f0f0]">
      <Grip width="w-[5px]" />
      <Tool icon="newChart" label="Новый график" width="w-[14px]" /><Caret width="w-[7px]" />
      <Tool icon="profiles" label="Профили" width="w-[14px]" /><Caret width="w-[7px]" />
      <Sep width="w-[4px]" />
      <Tool icon="market" label="Обзор рынка" width="w-[15px]" pressed />
      <Tool icon="target" label="Окно данных" width="w-[19px]" />
      <Tool icon="folder" label="Навигатор" width="w-[15px]" pressed />
      <Tool icon="navigator" label="Терминал" width="w-[16px]" pressed />
      <Tool icon="tester" label="Тестер стратегий" width="w-[20px]" />
      <Grip width="w-[4px]" />
      <button className="flex h-[14px] w-[60px] shrink-0 items-center whitespace-nowrap pl-px"><Svg>{ICONS.order}</Svg>Новый ордер</button>
      <Tool icon="book" label="MetaEditor" width="w-[17px]" />
      <Tool icon="laptop" label="VPS" width="w-[16px]" />
      <Tool icon="signal" label="Сигналы" width="w-[18px]" />
      <button className="flex h-[14px] w-[66px] shrink-0 items-center gap-px whitespace-nowrap border border-[#b4b4b4] bg-[#f8f8f8] pl-px"><Svg>{ICONS.auto}</Svg>Авто-торговля</button>
      <Grip width="w-[6px]" />
      <Tool icon="bars" label="Бары" width="w-[16px]" />
      <Tool icon="candles" label="Свечи" width="w-[18px]" pressed />
      <Tool icon="line" label="Линия" width="w-[16px]" />
      <Sep width="w-[4px]" />
      <Tool icon="zoomIn" label="Увеличить" width="w-[15px]" />
      <Tool icon="zoomOut" label="Уменьшить" width="w-[18px]" />
      <Tool icon="tile" label="Мозаика" width="w-[16px]" />
      <Sep width="w-[5px]" />
      <Tool icon="scroll" label="Автопрокрутка" width="w-[16px]" />
      <Tool icon="shift" label="Сдвиг графика" width="w-[17px]" pressed />
      <Sep width="w-[5px]" />
      <Tool icon="indicator" label="Индикаторы" width="w-[13px]" /><Caret width="w-[6px]" />
      <Tool icon="clock" label="Периоды" width="w-[16px]" /><Caret width="w-[5px]" />
      <Tool icon="template" label="Шаблоны" width="w-[18px]" /><Caret width="w-[4px]" />
      <Grip width="w-[8px]" />
      <button className="h-[14px] w-[16px] shrink-0 border border-[#b4b4b4] bg-[#f8f8f8] text-[6px] text-[#444]">M1</button>
      {TIMEFRAMES.map(t => <button key={t.label} className={`h-[14px] shrink-0 text-[6px] text-[#444] ${t.width}`}>{t.label}</button>)}
      <Grip width="w-[7px]" />
      <Tool icon="cursor" label="Курсор" width="w-[15px]" pressed />
      <Tool icon="cross" label="Перекрестие" width="w-[18px]" />
      <Sep width="w-[3px]" />
      <Tool icon="vline" label="Вертикальная линия" width="w-[17px]" />
      <Tool icon="hline" label="Горизонтальная линия" width="w-[16px]" />
      <Tool icon="tline" label="Трендовая линия" width="w-[17px]" />
      <Tool icon="channel" label="Канал" width="w-[17px]" />
      <Tool icon="fibo" label="Фибоначчи" width="w-[16px]" />
      <button className="h-[14px] w-[17px] shrink-0 font-bold text-[#555]">A</button>
      <Tool icon="label" label="Метка" width="w-[17px]" />
      <Tool icon="arrows" label="Стрелки" width="w-[15px]" /><Caret width="w-[4px]" />
      <Sep width="w-[4px]" />
      <span className="flex-1" />
      <Tool icon="search" label="Поиск" width="w-[18px]" />
      <Tool icon="chat" label="Чат" width="w-[18px]" />
    </div>
  )
}

export default function App() {
  return (
    <div className="flex min-h-screen bg-black pl-[5px] pr-[2px] font-['Open_Sans','Noto_Sans',sans-serif] text-[7px] leading-none text-[#101010]">
      <div className="flex min-w-0 flex-1 flex-col">
        <TitleBar />
        <div className="flex flex-1 flex-col bg-[#f0f0f0]">
          <MenuBar />
          <Toolbar />
          <main className="flex">
            <aside className="w-[167px] shrink-0 bg-[#f0f0f0]">
              <MarketWatch />
              <Navigator />
            </aside>
            <Chart />
          </main>
          <Terminal />
          <StatusBar />
        </div>
        <Taskbar />
      </div>
      <div className="w-[3px] shrink-0 border-r border-[#888]" />
    </div>
  )
}
